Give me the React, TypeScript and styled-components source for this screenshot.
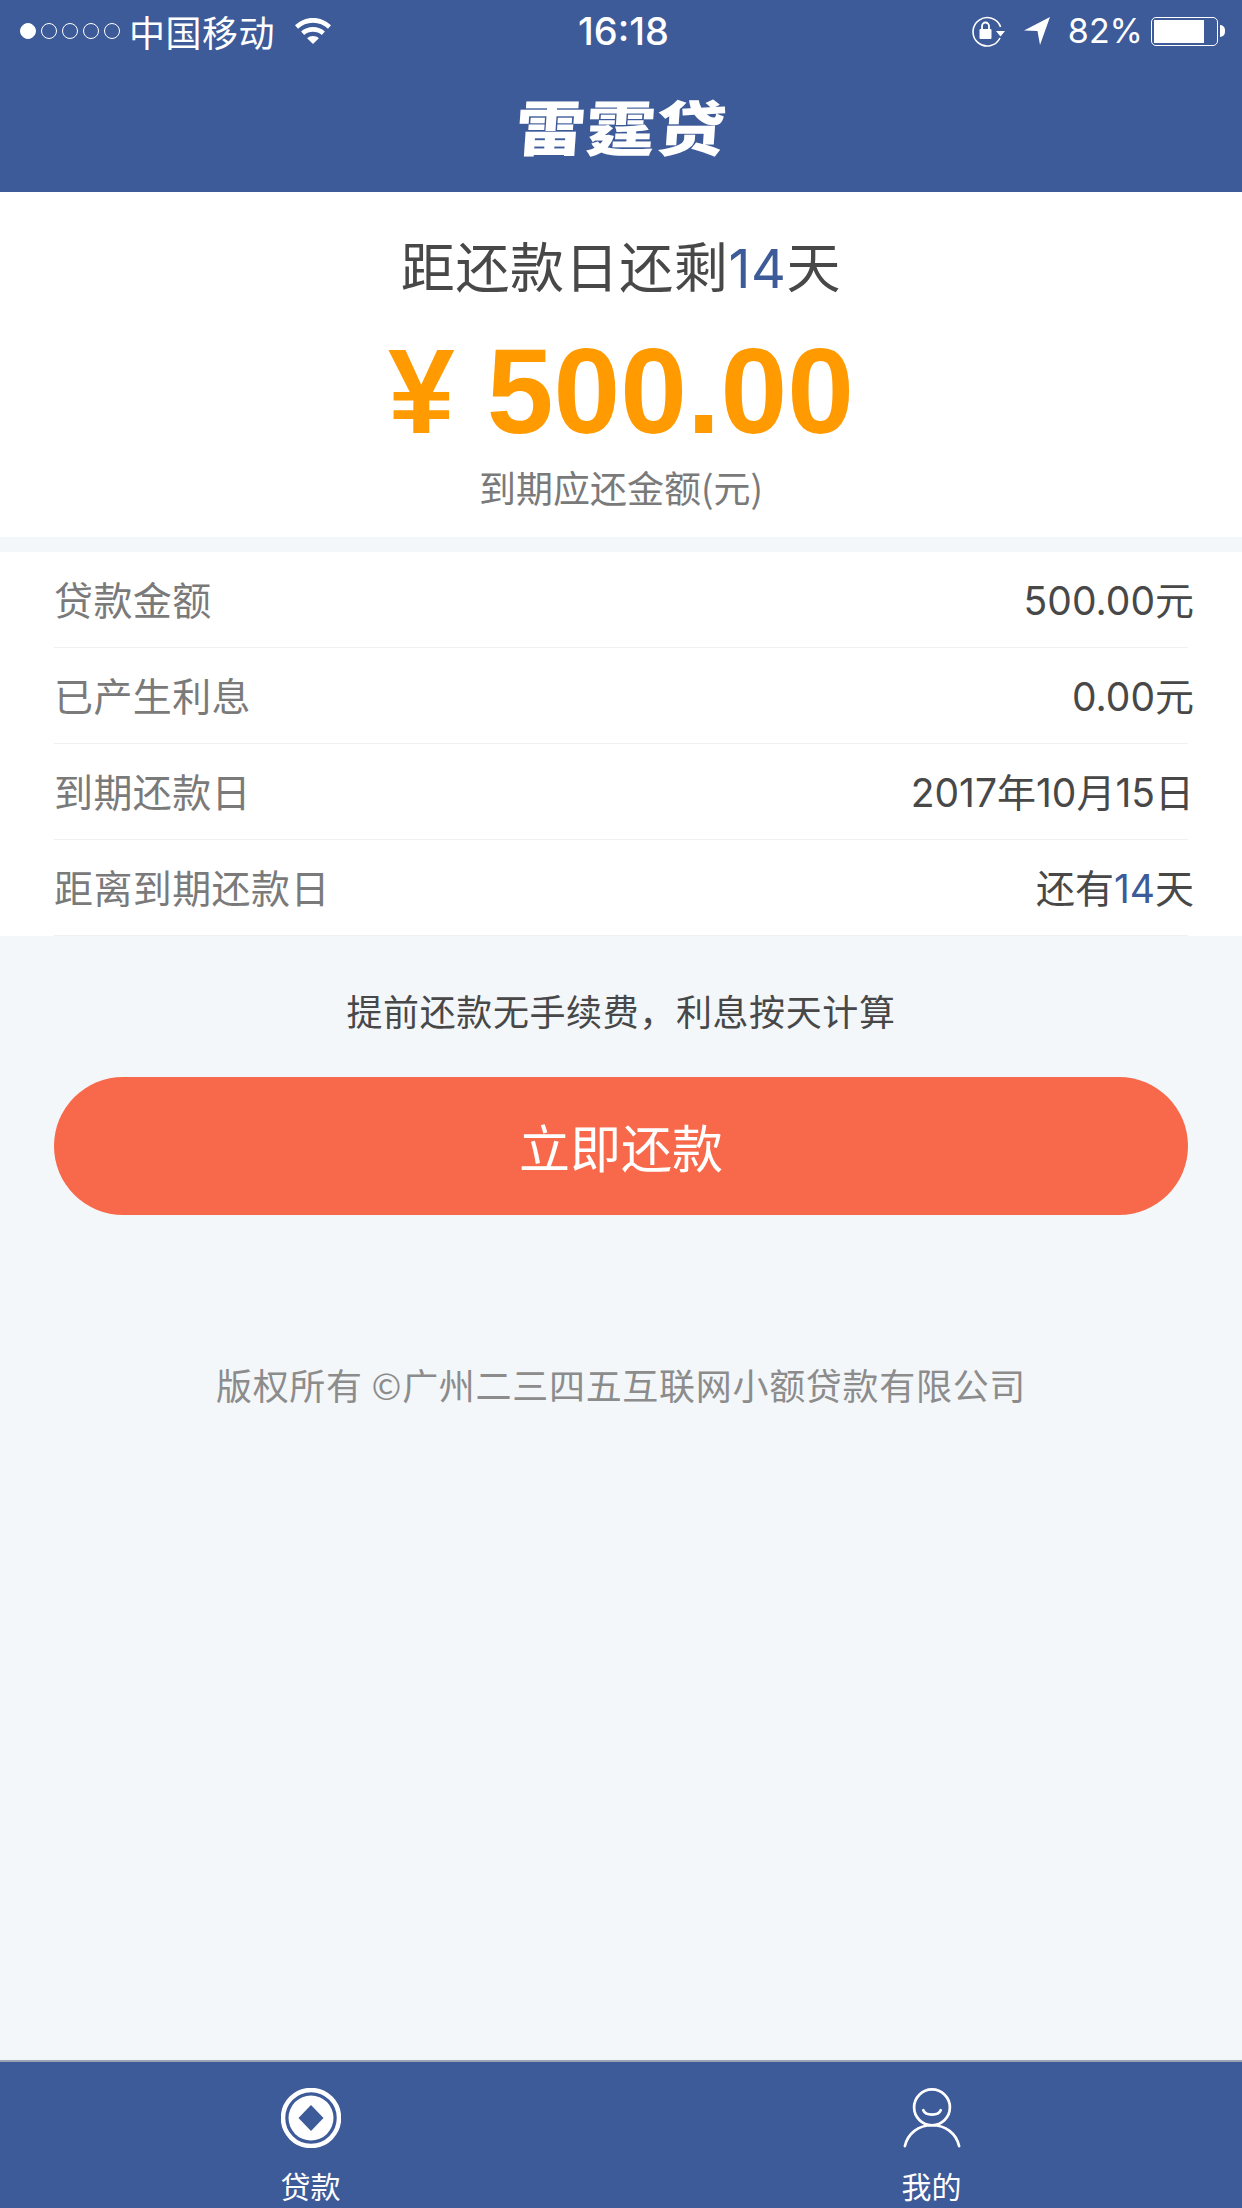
import * as React from 'react';
import styled, { createGlobalStyle } from 'styled-components';

const BLUE = '#3d5a99';
const CJK = '"Noto Sans CJK SC", "Noto Sans", sans-serif';
const LATIN = 'Inter, "Noto Sans CJK SC", sans-serif';

export default function App() {
  const rows = [
    { label: '贷款金额', value: <>500.00元</> },
    { label: '已产生利息', value: <>0.00元</> },
    { label: '到期还款日', value: <>2017年10月15日</> },
    { label: '距离到期还款日', value: <>还有<Accent>14</Accent>天</> },
  ];

  return (
    <Page>
      <GlobalStyle />
      <Header>
        <StatusBar>
          <StatusLeft>
            <Dots>
              {[0, 1, 2, 3, 4].map(i => <Dot key={i} $filled={i === 0} />)}
            </Dots>
            <Carrier>中国移动</Carrier>
            <svg width="36" height="26" viewBox="0 0 36 26" fill="#fff">
              <path d="M18 0C11 0 5 2.700 0 7.300l3 3.400C7 7 12.200 4.800 18 4.800s11 2.200 15 5.900l3-3.400C31 2.700 25 0 18 0z" />
              <path d="M18 9c-4.600 0-8.700 1.700-11.900 4.500l3.100 3.500C11.600 15 14.700 13.800 18 13.800s6.400 1.200 8.800 3.200l3.100-3.500C26.700 10.700 22.600 9 18 9z" />
              <path d="M18 18c-2.300 0-4.300.8-5.900 2.200L18 26l5.900-5.800C22.300 18.800 20.300 18 18 18z" />
            </svg>
          </StatusLeft>
          <Clock>16:18</Clock>
          <StatusRight>
            <svg width="34" height="31" viewBox="0 0 34 31">
              <path d="M29 22a14.200 14.200 0 1 1 .6-11" fill="none" stroke="#fff" strokeWidth="1.600" />
              <path d="M25 15h9l-4.500 5.500z" fill="#fff" />
              <rect x="8.500" y="13" width="12" height="10" rx="1" fill="#fff" />
              <path d="M11 13V10a3.500 3.500 0 0 1 7 0v3" fill="none" stroke="#fff" strokeWidth="1.800" />
            </svg>
            <LocationIcon width="26" height="28" viewBox="0 0 26 28">
              <path d="M26 0L16 28l-2.500-14L0 13.500z" fill="#fff" />
            </LocationIcon>
            <Percent>82%</Percent>
            <Battery>
              <BatteryFill $level={0.82} />
            </Battery>
            <BatteryNub />
          </StatusRight>
        </StatusBar>
        <NavBar>
          <Logo>雷霆贷</Logo>
        </NavBar>
      </Header>

      <Hero>
        <Countdown>距还款日还剩<Accent>14</Accent>天</Countdown>
        <Amount><Yen>¥</Yen>500.00</Amount>
        <AmountCaption>到期应还金额(元)</AmountCaption>
      </Hero>

      <DetailList>
        {rows.map(row => (
          <DetailRow key={row.label}>
            <DetailLabel>{row.label}</DetailLabel>
            <DetailValue>{row.value}</DetailValue>
          </DetailRow>
        ))}
      </DetailList>

      <Main>
        <Tip>提前还款无手续费，利息按天计算</Tip>
        <RepayButton>立即还款</RepayButton>
        <Copyright>版权所有 ©广州二三四五互联网小额贷款有限公司</Copyright>
      </Main>

      <TabBar>
        <Tab>
          <svg width="60" height="60" viewBox="0 0 60 60">
            <circle cx="30" cy="30" r="28" fill="none" stroke="#fff" strokeWidth="4.500" />
            <circle cx="30" cy="30" r="22.500" fill="#fff" />
            <path d="M30 17l12.500 13L30 43 17.500 30z" fill={BLUE} />
          </svg>
          <TabLabel>贷款</TabLabel>
        </Tab>
        <Tab>
          <svg width="60" height="60" viewBox="0 0 60 62" fill="none" stroke="#fff" strokeWidth="2.800" strokeLinecap="round">
            <ellipse cx="30" cy="20" rx="18.500" ry="18.500" />
            <path d="M21 23c2.500 6 15.500 6 18 0" />
            <path d="M2 60C5 47 16 38.500 30 38.500S55 47 58 60" />
          </svg>
          <TabLabel>我的</TabLabel>
        </Tab>
      </TabBar>
    </Page>
  );
}

const GlobalStyle = createGlobalStyle`
  html, body {
    margin: 0;
    padding: 0;
    background: #f4f7fa;
  }
`;

const Page = styled.div`
  width: 1242px;
  height: 2208px;
  display: flex;
  flex-direction: column;
  overflow: hidden;
  background: #f4f7fa;
  font-family: ${CJK};
`;

const Header = styled.header`
  height: 192px;
  background: ${BLUE};
  color: #fff;
  display: flex;
  flex-direction: column;
`;

const StatusBar = styled.div`
  height: 60px;
  display: grid;
  grid-template-columns: 1fr auto 1fr;
  align-items: center;
  padding: 0 17px 0 20px;
`;

const StatusLeft = styled.div`
  display: flex;
  align-items: center;
`;

const Dots = styled.div`
  display: flex;
  gap: 5px;
  margin-right: 9px;
`;

const Dot = styled.span<{ $filled: boolean }>`
  width: 16px;
  height: 16px;
  box-sizing: border-box;
  border-radius: 50%;
  border: 1.5px solid #fff;
  background: ${p => (p.$filled ? '#fff' : 'transparent')};
`;

const Carrier = styled.span`
  font-size: 36px;
  letter-spacing: 0.5px;
  line-height: 60px;
  margin-right: 20px;
`;

const Clock = styled.span`
  font: 500 38px/62px Inter, sans-serif;
  margin-left: 2px;
`;

const StatusRight = styled.div`
  display: flex;
  align-items: center;
  justify-content: flex-end;
`;

const LocationIcon = styled.svg`
  margin-left: 19px;
`;

const Percent = styled.span`
  font: 400 34px/60px Inter, sans-serif;
  margin: 0 8px 0 18px;
`;

const Battery = styled.div`
  width: 67px;
  height: 29px;
  box-sizing: border-box;
  border: 1.5px solid #fff;
  border-radius: 5px;
  padding: 2px;
  display: flex;
`;

const BatteryFill = styled.div<{ $level: number }>`
  width: ${p => p.$level * 100}%;
  background: #fff;
`;

const BatteryNub = styled.div`
  width: 5px;
  height: 12px;
  margin-left: 2px;
  background: #fff;
  border-radius: 0 6px 6px 0;
`;

const NavBar = styled.div`
  height: 132px;
  display: flex;
  justify-content: center;
  align-items: flex-start;
`;

const Logo = styled.div`
  font-size: 68px;
  font-weight: 900;
  line-height: 68px;
  margin-top: 31px;
  transform: skewX(-4deg) scale(1.03, 0.88);
`;

const Accent = styled.span`
  color: ${BLUE};
  font-family: ${LATIN};
`;

const Hero = styled.section`
  height: 345px;
  background: #fff;
  display: flex;
  flex-direction: column;
  align-items: center;
  color: #484848;
`;

const Countdown = styled.div`
  font-size: 54px;
  letter-spacing: 0.6px;
  line-height: 64px;
  margin-top: 41px;
`;

const Amount = styled.div`
  font: 700 120px/130px "Liberation Sans", sans-serif;
  color: #ff9a00;
  margin-top: 25px;
`;

const Yen = styled.span`
  margin-right: 32px;
`;

const AmountCaption = styled.div`
  font-size: 37px;
  line-height: 50px;
  color: #7a7a7a;
  margin-top: 6px;
`;

const DetailList = styled.section`
  margin-top: 15px;
  background: #fff;
  padding-left: 54px;
`;

const DetailRow = styled.div`
  height: 96px;
  box-sizing: border-box;
  margin-right: 54px;
  display: flex;
  justify-content: space-between;
  align-items: center;
  padding-bottom: 4px;
  border-bottom: 1px solid #f0f0f0;
`;

const DetailLabel = styled.span`
  font-size: 39px;
  letter-spacing: 0.4px;
  color: #7a7a7a;
`;

const DetailValue = styled.span`
  font-size: 39px;
  font-family: ${LATIN};
  color: #484848;
  margin-right: -6px;
`;

const Main = styled.main`
  flex: 1;
  display: flex;
  flex-direction: column;
  align-items: center;
  padding: 0 54px;
`;

const Tip = styled.div`
  font-size: 36px;
  line-height: 50px;
  letter-spacing: 0.6px;
  color: #484848;
  margin-top: 49px;
`;

const RepayButton = styled.button`
  width: 100%;
  height: 138px;
  margin-top: 42px;
  border: none;
  border-radius: 69px;
  background: #f7694a;
  color: #fff;
  font-family: ${CJK};
  font-size: 51px;
`;

const Copyright = styled.div`
  font-size: 36px;
  line-height: 50px;
  letter-spacing: 0.7px;
  color: #8c8c8c;
  margin-top: 144px;
`;

const TabBar = styled.nav`
  height: 148px;
  box-sizing: border-box;
  background: ${BLUE};
  border-top: 2px solid #9aa3b5;
  display: grid;
  grid-template-columns: 1fr 1fr;
`;

const Tab = styled.div`
  display: flex;
  flex-direction: column;
  align-items: center;
  padding-top: 26px;
  color: #fff;
`;

const TabLabel = styled.span`
  font-size: 30px;
  line-height: 36px;
  margin-top: 19px;
`;
